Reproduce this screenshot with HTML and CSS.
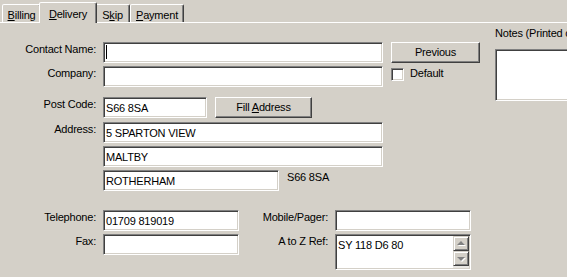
FILE: index.html
```html
<!DOCTYPE html>
<html>
<head>
<meta charset="utf-8">
<link rel="stylesheet" href="styles.css">
</head>
<body>
<div class="window">
  <div class="tabs">
    <div class="tab t-billing"><u>B</u>illing</div>
    <div class="tab active t-delivery"><u>D</u>elivery</div>
    <div class="tab t-skip">S<u>k</u>ip</div>
    <div class="tab t-payment"><u>P</u>ayment</div>
  </div>
  <div class="panel">
    <div class="form">
      <div class="row r1">
        <div class="lbl">Contact Name:</div>
        <div class="field w280"><span class="caret"></span></div>
        <div class="btn btn-prev">Previous</div>
      </div>
      <div class="row r2">
        <div class="lbl">Company:</div>
        <div class="field w280"></div>
        <div class="check"></div>
        <div class="text check-label">Default</div>
      </div>
      <div class="row r3">
        <div class="lbl">Post Code:</div>
        <div class="field w104">S66 8SA</div>
        <div class="btn btn-fill">Fill <u>A</u>ddress</div>
      </div>
      <div class="row r4">
        <div class="lbl">Address:</div>
        <div class="field w280">5 SPARTON VIEW</div>
      </div>
      <div class="row r5 indent">
        <div class="field w280">MALTBY</div>
      </div>
      <div class="row r6 indent">
        <div class="field w176">ROTHERHAM</div>
        <div class="text pc-label">S66 8SA</div>
      </div>
      <div class="row r7">
        <div class="lbl">Telephone:</div>
        <div class="field w136">01709 819019</div>
        <div class="lbl lbl2">Mobile/Pager:</div>
        <div class="field w136"></div>
      </div>
      <div class="row r8">
        <div class="lbl">Fax:</div>
        <div class="field w136"></div>
        <div class="lbl lbl2">A to Z Ref:</div>
        <div class="memo w136">
          <div class="memo-text">SY 118 D6 80</div>
          <div class="vscroll">
            <div class="sbtn"><span class="arrow up"></span></div>
            <div class="sbtn"><span class="arrow down"></span></div>
            <div class="strack"></div>
          </div>
        </div>
      </div>
    </div>
    <div class="notes">
      <div class="notes-label">Notes (Printed on Delivery Note)</div>
      <div class="field notes-box"></div>
    </div>
  </div>
</div>
</body>
</html>
```

FILE: styles.css
```css
html, body {
  margin: 0;
  padding: 0;
}
body {
  width: 567px;
  height: 277px;
  overflow: hidden;
  background: #d4d0c8;
  font-family: "Liberation Sans", Arial, sans-serif;
  font-size: 11px;
  line-height: 13px;
  letter-spacing: -0.2px;
  color: #000;
}
.window {
  width: 567px;
  height: 277px;
}
u {
  text-decoration: underline;
  text-underline-offset: 1px;
}

/* tabs */
.tabs {
  display: flex;
  align-items: flex-end;
  box-sizing: border-box;
  height: 23px;
  padding-left: 2px;
  border-bottom: 1px solid #fff;
}
.tab {
  box-sizing: border-box;
  height: 18px;
  border: 1px solid;
  border-bottom: none;
  border-color: #fff #404040 transparent #fff;
  box-shadow: inset -1px 0 #808080;
  border-radius: 2px 2px 0 0;
  text-align: center;
  padding-top: 4px;
  white-space: nowrap;
  background: #d4d0c8;
}
.t-billing { width: 39px; }
.t-delivery { width: 54px; }
.t-skip { width: 35px; }
.t-payment { width: 54px; }
.tab.active {
  width: 58px;
  height: 21px;
  margin: 0 -2px -1px;
  position: relative;
  z-index: 1;
  padding-top: 5px;
}

/* panel */
.panel {
  display: flex;
}
.form {
  width: 495px;
  flex-shrink: 0;
  padding-top: 19px;
}
.row {
  display: flex;
  align-items: flex-start;
  height: 21px;
}
.r2, .r5, .r6, .r8 { margin-top: 3px; }
.r3 { margin-top: 10px; }
.r4 { margin-top: 4px; }
.r7 { margin-top: 19px; }
.indent { padding-left: 103px; }

.lbl {
  width: 96px;
  margin-right: 7px;
  text-align: right;
  padding-top: 1px;
  white-space: nowrap;
}
.lbl2 {
  width: 89px;
}
.text {
  padding-top: 1px;
  white-space: nowrap;
}

.field {
  box-sizing: border-box;
  height: 21px;
  background: #fff;
  border: 1px solid;
  border-color: #808080 #fff #fff #808080;
  box-shadow: inset 1px 1px #404040, inset -1px -1px #d4d0c8;
  padding: 4px 2px 0;
  white-space: nowrap;
  overflow: hidden;
}
.w280 { width: 280px; }
.w176 { width: 176px; }
.w136 { width: 136px; }
.w104 { width: 104px; }

.caret {
  display: block;
  width: 1px;
  height: 14px;
  margin-top: -2px;
  background: #000;
}

.btn {
  box-sizing: border-box;
  height: 21px;
  background: #d4d0c8;
  border: 1px solid;
  border-color: #fff #404040 #404040 #fff;
  box-shadow: inset -1px -1px #808080;
  text-align: center;
  padding-top: 3px;
  white-space: nowrap;
}
.btn-prev {
  width: 89px;
  margin-left: 8px;
}
.btn-fill {
  width: 97px;
  margin-left: 8px;
}

.check {
  box-sizing: border-box;
  width: 13px;
  height: 13px;
  margin: 2px 0 0 8px;
  background: #fff;
  border: 1px solid;
  border-color: #808080 #fff #fff #808080;
  box-shadow: inset 1px 1px #404040, inset -1px -1px #d4d0c8;
}
.check-label { margin-left: 6px; }
.pc-label { margin-left: 8px; }

/* memo with scrollbar */
.memo {
  box-sizing: border-box;
  height: 36px;
  display: flex;
  background: #fff;
  border: 1px solid;
  border-color: #808080 #fff #fff #808080;
  box-shadow: inset 1px 1px #404040, inset -1px -1px #d4d0c8;
  padding: 1px;
}
.memo-text {
  flex: 1;
  padding: 3px 0 0 1px;
  white-space: nowrap;
}
.vscroll {
  width: 16px;
  display: flex;
  flex-direction: column;
}
.sbtn {
  box-sizing: border-box;
  height: 15px;
  background: #d4d0c8;
  border: 1px solid;
  border-color: #d4d0c8 #404040 #404040 #d4d0c8;
  box-shadow: inset 1px 1px #fff, inset -1px -1px #808080;
  display: flex;
  align-items: center;
  justify-content: center;
}
.strack {
  flex: 1;
  background: #e9e7e3;
}
.arrow {
  width: 0;
  height: 0;
  border-left: 4px solid transparent;
  border-right: 4px solid transparent;
  filter: drop-shadow(1px 1px 0 #fff);
}
.arrow.up {
  border-bottom: 4px solid #808080;
  margin-top: -1px;
}
.arrow.down {
  border-top: 4px solid #808080;
}

/* notes */
.notes {
  padding-top: 4px;
  white-space: nowrap;
}
.notes-label {
  height: 13px;
}
.notes-box {
  width: 90px;
  height: 52px;
  margin-top: 9px;
}
```
